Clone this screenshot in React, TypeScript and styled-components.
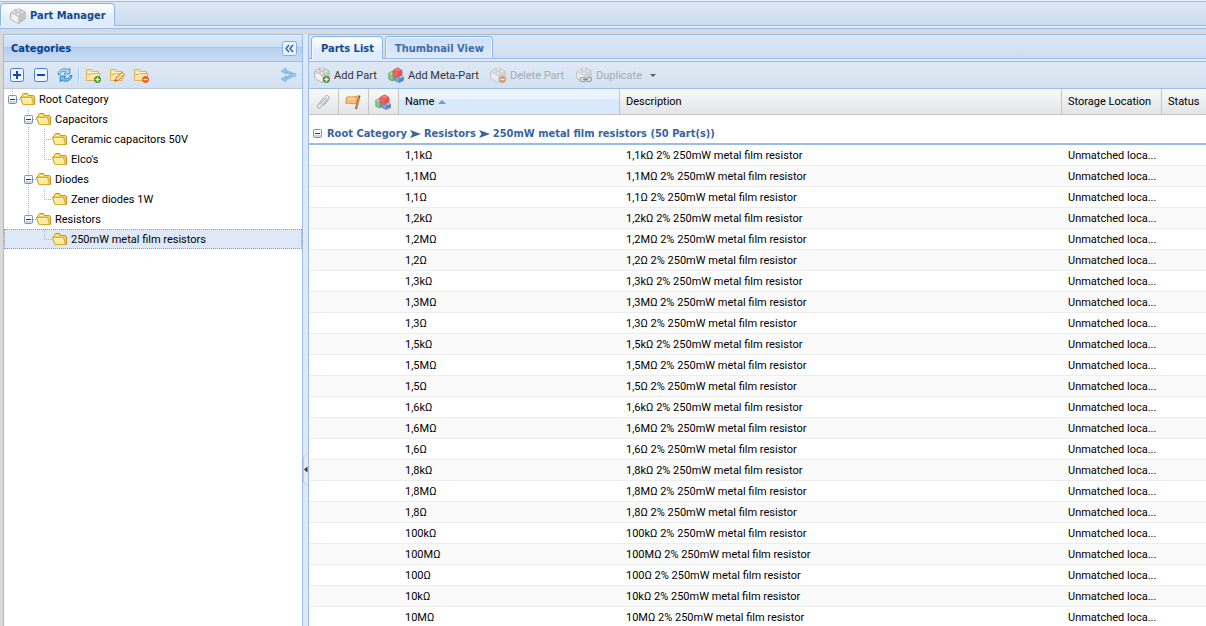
import React from 'react';
import styled, { createGlobalStyle, css } from 'styled-components';

const BOLD = '"DejaVu Sans Condensed", "Noto Sans", sans-serif';
const TEXT = 'Roboto, "Noto Sans", sans-serif';

const GlobalStyle = createGlobalStyle`
  * { box-sizing: border-box; }
  body {
    margin: 0;
    background: #d9d9d9;
    color: #000;
    font-family: ${TEXT};
    font-size: 11px;
    line-height: 14px;
  }
  button { font: inherit; color: inherit; margin: 0; border: 0; background: none; }
  svg { display: block; flex: none; }
`;

const Page = styled.div`
  display: flex;
  flex-direction: column;
  height: 100vh;
  overflow: hidden;
`;

const TabStrip = styled.div<{ $main?: boolean }>`
  display: flex;
  align-items: flex-end;
  gap: 2px;
  flex: none;
  height: 25px;
  padding: 0 ${p => (p.$main ? 0 : 2)}px;
  border-top: 1px solid #99bce8;
  border-bottom: 1px solid #99bce8;
  background: ${p => (p.$main ? 'linear-gradient(#dde8f5, #cbdbef)' : 'linear-gradient(#dbe7f5, #cddef1)')};
`;

const TopBar = styled.header`
  flex: none;
  padding-top: 1px;
  background: #eaf1fa;
`;

const TabLedge = styled.div`
  height: 3px;
  flex: none;
  background: #deecfd;
  border-bottom: 1px solid #99bce8;
`;

const Tab = styled.button<{ $active?: boolean }>`
  display: flex;
  align-items: center;
  justify-content: center;
  gap: 4px;
  height: 22px;
  padding: 2px 8px 0 9px;
  border: 1px solid #8db2e3;
  border-bottom-width: 0;
  border-radius: 4px 4px 0 0;
  box-shadow: inset 1px 1px 0 #f5f9fe, inset -1px 0 0 #f5f9fe;
  font-family: ${BOLD};
  font-weight: bold;
  white-space: nowrap;
  ${p => p.$active
    ? css`
        color: #15498b;
        background: linear-gradient(#fff, #deecfd 70%);
        height: 23px;
        margin-bottom: -1px;
      `
    : css`
        color: #416da3;
        background: linear-gradient(#cfe0f5, #dbe9fb);
      `}
`;

const Body = styled.main`
  display: flex;
  flex: 1;
  min-height: 0;
  margin: 5px 0 0 3px;
`;

const SidePanel = styled.aside`
  display: flex;
  flex-direction: column;
  width: 300px;
  flex: none;
  border: 1px solid #99bce8;
  border-bottom: 0;
  background: #fff;
`;

const PanelHeader = styled.div`
  display: flex;
  align-items: center;
  justify-content: space-between;
  height: 27px;
  flex: none;
  padding: 0 5px 0 7px;
  border-bottom: 1px solid #99bce8;
  background: linear-gradient(#dae7f6, #cddef3 45%, #abc7ec 46%, #abc7ec 50%, #b8cfee 51%, #cbddf3);
  box-shadow: inset 0 1px 0 #f0f5fb;
`;

const PanelTitle = styled.h2`
  margin: 0;
  padding-top: 2px;
  font-family: ${BOLD};
  font-size: 11px;
  font-weight: bold;
  color: #04408c;
`;

const ToolButton = styled.button`
  padding: 0;
  width: 15px;
  height: 15px;
`;

const Toolbar = styled.div<{ $edge?: string }>`
  display: flex;
  align-items: center;
  height: 27px;
  flex: none;
  padding: 0 1px;
  border-bottom: 1px solid ${p => p.$edge || '#99bce8'};
  background: linear-gradient(#dfe9f5, #d3e1f1);
`;

const IconButton = styled.button<{ $push?: boolean }>`
  display: flex;
  justify-content: center;
  align-items: center;
  width: 24px;
  height: 22px;
  padding: 0;
  ${p => p.$push && css`margin-left: auto; opacity: 0.7;`}
`;

const Separator = styled.span`
  width: 2px;
  height: 14px;
  margin: 0 1px;
  border-left: 1px solid #98c8ff;
  border-right: 1px solid #fff;
`;

const TextButton = styled.button<{ $width: number }>`
  display: flex;
  align-items: center;
  gap: 4px;
  height: 22px;
  min-width: ${p => p.$width}px;
  padding: 0 4px;
  color: #333;
  white-space: nowrap;
  &:disabled { color: #a5abb2; }
  &:disabled svg { opacity: 0.6; }
`;

const ButtonText = styled.span`
  padding-top: 2px;
`;

const MenuArrow = styled.svg`
  margin-left: 4px;
`;

const Splitter = styled.div`
  display: flex;
  flex-direction: column;
  justify-content: center;
  flex: none;
  width: 5px;
  padding-top: 278px;
  background: #dfe8f6;
`;

const Collapse = styled.button`
  padding: 0;
  width: 5px;
  height: 35px;
`;

const MainPanel = styled.section`
  display: flex;
  flex-direction: column;
  flex: 1;
  min-width: 0;
  border-left: 1px solid #99bce8;
  background: #fff;
`;

const Tree = styled.ul`
  list-style: none;
  margin: 0;
  padding: 0;
`;

const TreeRow = styled.li<{ $selected?: boolean }>`
  display: flex;
  align-items: center;
  height: 20px;
  white-space: nowrap;
  ${p => p.$selected && css`
    background: #dfe8f6;
    outline: 1px dotted #8a9bb5;
    outline-offset: -1px;
  `}
`;

const TreeLabel = styled.span`
  padding: 2px 0 0 3px;
`;

const GridPane = styled.div`
  flex: 1;
  min-height: 0;
  overflow: hidden;
`;

const PartsTable = styled.table`
  width: 100%;
  table-layout: fixed;
  border-collapse: separate;
  border-spacing: 0;
`;

const HeadCell = styled.th<{ $sorted?: boolean }>`
  height: 26px;
  padding: 0 6px;
  text-align: left;
  font-weight: normal;
  white-space: nowrap;
  border-right: 1px solid #c5c5c5;
  border-bottom: 1px solid #c5c5c5;
  background: ${p => (p.$sorted
    ? 'linear-gradient(#ebf3fd 40%, #d9e8fb 41%)'
    : 'linear-gradient(#f9f9f9, #e3e4e6)')};
  &:last-child { border-right: 0; }
`;

const SortButton = styled.button`
  display: flex;
  align-items: center;
  gap: 4px;
  padding: 0;
`;

const GroupCell = styled.td`
  height: 30px;
  padding: 9px 4px 0;
  border-bottom: 2px solid #99bbe8;
`;

const GroupTitle = styled.div`
  display: flex;
  align-items: center;
  gap: 5px;
  font-family: ${BOLD};
  font-weight: bold;
  color: #3764a0;
  white-space: nowrap;
`;

const Crumb = styled.span`
  display: flex;
  align-items: center;
  gap: 3px;
`;

const PartRow = styled.tr`
  background: #fff;
  &:nth-child(odd) { background: #fafafa; }
`;

const Cell = styled.td`
  height: 21px;
  padding: 1px 6px 0;
  border-bottom: 1px solid #ededed;
  white-space: nowrap;
  overflow: hidden;
`;

const Brick = () => (
  <g>
    <path d="M.5 5 5.5 1.500 8 2.500 10.500 1.500 15 4V11L8.500 15.500 1 11.500Z" fill="#d9d9d6" stroke="#a9a9a6" strokeWidth="1" />
    <path d="M1 5.500 8 8.500V15L1.500 11.500Z" fill="#f3f3f1" />
    <path d="M8 8.500 14.500 5V11L8.500 15Z" fill="#c4c4c1" />
    <path d="M1 5.500 8 8.500 14.500 5 9 2Z" fill="#e7e7e4" />
    <g fill="#fafaf9" stroke="#b2b2af" strokeWidth=".7">
      <path d="M2 4v1.500c1 1 3 1 4 0V4M6 6v1.500c1 1 3 1 4 0V6M6 2v1.500c1 1 3 1 4 0V2M10 4v1.500c1 1 3 1 4 0V4" />
      <ellipse cx="8" cy="2" rx="2" ry="1.200" /><ellipse cx="4" cy="4" rx="2" ry="1.200" />
      <ellipse cx="12" cy="4" rx="2" ry="1.200" /><ellipse cx="8" cy="6" rx="2" ry="1.200" />
    </g>
  </g>
);

const Badge = ({ minus }: { minus?: boolean }) => (
  <g>
    <circle cx="12.500" cy="12.500" r="3" fill={minus ? '#ee6a22' : '#69a84d'} stroke={minus ? '#d95a1a' : '#3f7d2a'} />
    <path d={minus ? 'M10.500 12.500h4' : 'M10.500 12.500h4M12.500 10.500v4'} stroke="#fff" strokeWidth="1.200" />
  </g>
);

const Icon = ({ children, size = 16 }: { children: React.ReactNode; size?: number }) => (
  <svg width={size} height={size} viewBox={`0 0 ${size} ${size}`} fill="none" aria-hidden="true">{children}</svg>
);

const BlocksIcon = () => (
  <Icon>
    <path d="M.8 6 4 4.500 8 6V12L4.500 14 .8 12Z" fill="#8cc48c" stroke="#5f9f66" strokeWidth=".8" />
    <path d="M4.500 8 7.500 7V12L4.500 13.500Z" fill="#67aa70" />
    <path d="M7 10 11 8 15.500 10V13.500L11 15.500 7 13.500Z" fill="#7ba6d6" stroke="#5580b8" strokeWidth=".8" />
    <path d="M11 11.500 15 10.500V13.500L11 15Z" fill="#5b88c0" />
    <path d="M5 3.500 9.500 1 14 3.500V8L9.500 10.500 5 8Z" fill="#f06464" stroke="#dc4a4c" strokeWidth=".8" />
    <path d="M9.500 6 13.500 4V8L9.500 10Z" fill="#df5255" />
    <ellipse cx="9.500" cy="2.800" rx="2.500" ry="1.500" fill="#ff8d86" stroke="#e05252" strokeWidth=".7" />
    <ellipse cx="3" cy="6.500" rx="1.500" ry="1" fill="#b9dfb6" />
    <ellipse cx="13" cy="10" rx="1.500" ry="1" fill="#aecbea" />
  </Icon>
);

const SmallFolder = () => (
  <g>
    <path d="M1.500 12.500V2.500H6.500L7.500 4.500H13.500V7" fill="#f8e0a0" stroke="#dfb45c" />
    <path d="M1.500 13.500V7.500H5.500L6.500 6.500H15L13.500 13.500Z" fill="#fbe6a8" stroke="#dfb45c" />
    <path d="M3 5.500H12" stroke="#fff6d8" />
  </g>
);

const FolderIcon = () => (
  <Icon>
    <path d="M2.500 12.500.5 6.500 2.500 4.500V3.500L3.500 2.500H7.500L8.500 4.500H13.500L14.500 5.500V13.500H3.500Z" fill="#f3cd52" stroke="#c4982c" />
    <path d="M.5 6.500H11.500L13.500 13.500H3Z" fill="#fdeb97" stroke="#d3a93a" />
    <path d="M2 7.500H11M3.500 4.500H7" stroke="#fffad2" />
  </Icon>
);

const ToggleBox = () => (
  <>
    <rect x=".5" y=".5" width="8" height="8" rx="1" fill="#f7f9fc" stroke="#7890b2" />
    <path d="M1 6h7v2H1Z" fill="#cdd7e5" />
    <path d="M2 4.500h5" stroke="#253a63" />
  </>
);

const Toggle = () => (
  <svg width="9" height="9" viewBox="0 0 9 9" aria-hidden="true"><ToggleBox /></svg>
);

const Arrowhead = () => (
  <svg width="11" height="8" viewBox="0 0 11 8" aria-hidden="true">
    <path d="M0 0 11 4 0 8 2.500 4Z" fill="#3764a0" />
  </svg>
);

type Guide = 'blank' | 'line' | 'elbow' | 'end' | 'toggle' | 'toggleEnd' | 'root';

const guideLines: Record<Guide, string> = {
  blank: '',
  line: 'M8.500 0V20',
  elbow: 'M8.500 0V20M8 10.500H16',
  end: 'M8.500 0V10M8 10.500H16',
  toggle: 'M8.500 0V20M13 10.500H16',
  toggleEnd: 'M8.500 0V8M13 10.500H16',
  root: 'M8.500 0V5M13 10.500H16',
};

const GuideCell = ({ kind }: { kind: Guide }) => {
  const box = kind === 'toggle' || kind === 'toggleEnd' || kind === 'root';
  return (
    <svg width="16" height="20" viewBox="0 0 16 20" aria-hidden="true">
      <path d={guideLines[kind]} stroke="#b5b5b5" strokeDasharray="1 1" fill="none" />
      {box && <g transform="translate(4 6)"><ToggleBox /></g>}
    </svg>
  );
};

const categories: { label: string; guides: Guide[]; selected?: boolean }[] = [
  { label: 'Root Category', guides: ['root'] },
  { label: 'Capacitors', guides: ['blank', 'toggle'] },
  { label: 'Ceramic capacitors 50V', guides: ['blank', 'line', 'elbow'] },
  { label: "Elco's", guides: ['blank', 'line', 'end'] },
  { label: 'Diodes', guides: ['blank', 'toggle'] },
  { label: 'Zener diodes 1W', guides: ['blank', 'line', 'end'] },
  { label: 'Resistors', guides: ['blank', 'toggleEnd'] },
  { label: '250mW metal film resistors', guides: ['blank', 'blank', 'end'], selected: true },
];

const parts = [
  '1,1kΩ', '1,1MΩ', '1,1Ω', '1,2kΩ', '1,2MΩ', '1,2Ω', '1,3kΩ', '1,3MΩ', '1,3Ω', '1,5kΩ', '1,5MΩ', '1,5Ω',
  '1,6kΩ', '1,6MΩ', '1,6Ω', '1,8kΩ', '1,8MΩ', '1,8Ω', '100kΩ', '100MΩ', '100Ω', '10kΩ', '10MΩ',
];

export default function App() {
  return (
    <>
      <GlobalStyle />
      <Page>
        <TopBar>
          <TabStrip $main>
            <Tab $active>
              <Icon><Brick /></Icon>
              Part Manager
            </Tab>
          </TabStrip>
          <TabLedge />
        </TopBar>
        <Body>
          <SidePanel>
            <PanelHeader>
              <PanelTitle>Categories</PanelTitle>
              <ToolButton aria-label="Collapse panel">
                <Icon size={15}>
                  <rect x=".5" y=".5" width="14" height="14" rx="2" fill="#e8f2fd" stroke="#84aee2" />
                  <path d="M7 4 4 7.500 7 11M11 4 8 7.500 11 11" stroke="#35639f" strokeWidth="1.500" />
                </Icon>
              </ToolButton>
            </PanelHeader>
            <Toolbar $edge="#c0cbd9">
              <IconButton aria-label="Expand all">
                <Icon>
                  <rect x="1.500" y="1.500" width="13" height="13" rx="2" fill="#edf4ff" stroke="#4a7be0" />
                  <path d="M4 8h8M8 4v8" stroke="#1b43b5" strokeWidth="2" />
                </Icon>
              </IconButton>
              <IconButton aria-label="Collapse all">
                <Icon>
                  <rect x="1.500" y="1.500" width="13" height="13" rx="2" fill="#edf4ff" stroke="#4a7be0" />
                  <path d="M4 8h8" stroke="#1b43b5" strokeWidth="2" />
                </Icon>
              </IconButton>
              <IconButton aria-label="Reload">
                <Icon>
                  <path d="M1 7.500C1.500 2.500 7 .2 11 2.800L12.800 1.200V7H7L9 5C7 3.600 3.500 4.500 3 7.500Z" fill="#a9dbf8" stroke="#3d8fd2" strokeWidth=".9" strokeLinejoin="round" />
                  <path d="M15 8.500C14.500 13.500 9 15.800 5 13.200L3.200 14.800V9H9L7 11C9 12.400 12.500 11.500 13 8.500Z" fill="#7cc0ee" stroke="#2b7ac4" strokeWidth=".9" strokeLinejoin="round" />
                </Icon>
              </IconButton>
              <Separator />
              <IconButton aria-label="Add category"><Icon><SmallFolder /><Badge /></Icon></IconButton>
              <IconButton aria-label="Edit category">
                <Icon>
                  <SmallFolder />
                  <path d="M6 14 7 11 13 5 15.500 7.500 9.500 13.500Z" fill="#f7c466" stroke="#c08436" strokeWidth=".9" />
                  <path d="M8.500 12 14 6.500" stroke="#fff0b2" />
                  <path d="M5.500 14.500 6.500 12.500 7.500 13.500Z" fill="#4b4135" />
                </Icon>
              </IconButton>
              <IconButton aria-label="Delete category"><Icon><SmallFolder /><Badge minus /></Icon></IconButton>
              <IconButton $push aria-label="Sync selection">
                <Icon>
                  <path d="M3 4C7 4 7 7 15 8C7 9 7 12 3 12" stroke="#529fd5" strokeWidth="3" />
                  <path d="M4 4C8 4 8 7 15 8C8 9 8 12 4 12" stroke="#8fd0f4" />
                  <path d="M0 4 5 .8V7ZM0 12 5 9V15Z" fill="#75bde8" stroke="#529fd5" strokeWidth=".7" />
                </Icon>
              </IconButton>
            </Toolbar>
            <Tree>
              {categories.map(c => (
                <TreeRow key={c.label} $selected={c.selected}>
                  {c.guides.map((g, i) => <GuideCell key={i} kind={g} />)}
                  <FolderIcon />
                  <TreeLabel>{c.label}</TreeLabel>
                </TreeRow>
              ))}
            </Tree>
          </SidePanel>
          <Splitter>
            <Collapse aria-label="Collapse sidebar">
              <svg width="5" height="35" viewBox="0 0 5 35" aria-hidden="true">
                <path d="M5 .5 .5 5V30L5 34.500" fill="#e9e9e9" stroke="#c6c9cd" />
                <path d="M4.500 14.500V20.500L1 17.500Z" fill="#333" />
              </svg>
            </Collapse>
          </Splitter>
          <MainPanel>
            <TabStrip>
              <Tab $active>Parts List</Tab>
              <Tab>Thumbnail View</Tab>
            </TabStrip>
            <TabLedge />
            <Toolbar>
              <TextButton $width={74}><Icon><Brick /><Badge /></Icon><ButtonText>Add Part</ButtonText></TextButton>
              <TextButton $width={102}><BlocksIcon /><ButtonText>Add Meta-Part</ButtonText></TextButton>
              <TextButton $width={86} disabled><Icon><Brick /><Badge minus /></Icon><ButtonText>Delete Part</ButtonText></TextButton>
              <TextButton $width={86} disabled>
                <Icon>
                  <Brick />
                  <rect x="4" y="10.500" width="5" height="4" rx="1.500" fill="#ddd" stroke="#666" />
                  <rect x="10.500" y="10.500" width="5" height="4" rx="1.500" fill="#ddd" stroke="#666" />
                  <path d="M7 12.500h5" stroke="#555" />
                </Icon>
                <ButtonText>Duplicate</ButtonText>
                <MenuArrow width="6" height="3" viewBox="0 0 6 3" aria-hidden="true"><path d="M0 0H6L3 3Z" fill="#000" /></MenuArrow>
              </TextButton>
            </Toolbar>
            <GridPane>
              <PartsTable>
                <colgroup>
                  <col width="30" /><col width="30" /><col width="30" /><col width="221" /><col /><col width="100" /><col width="44" />
                </colgroup>
                <thead>
                  <tr>
                    <HeadCell aria-label="Attachments">
                      <Icon>
                        <path d="M5 10.500 10 5C11.500 3.500 13 5 11.500 6.500L6 13C4 15.500 1 13.500 3 10.500L9.500 3C12 0 15.500 2.500 13.500 5.500L8.500 11.500" stroke="#a2a2a2" />
                      </Icon>
                    </HeadCell>
                    <HeadCell aria-label="Flags">
                      <Icon>
                        <path d="M1.500 3.500C4 1.500 6 4.500 12 2V9C7 11 5 8 1 9.500Z" fill="#f9c078" stroke="#e0913c" />
                        <path d="M3 5C5 4 7 6 10.500 4.500" stroke="#ffe6bd" />
                        <path d="M14.500 1.500 11 15" stroke="#8f6234" strokeWidth="2.200" />
                        <path d="M14 3 11.500 14" stroke="#d8a566" />
                      </Icon>
                    </HeadCell>
                    <HeadCell aria-label="Meta-part"><BlocksIcon /></HeadCell>
                    <HeadCell $sorted aria-sort="ascending">
                      <SortButton>
                        Name
                        <svg width="8" height="4" viewBox="0 0 8 4" aria-hidden="true"><path d="M0 4H8L4 0Z" fill="#6a9ccc" /></svg>
                      </SortButton>
                    </HeadCell>
                    <HeadCell>Description</HeadCell>
                    <HeadCell>Storage Location</HeadCell>
                    <HeadCell>Status</HeadCell>
                  </tr>
                </thead>
                <tbody>
                  <tr>
                    <GroupCell colSpan={7}>
                      <GroupTitle>
                        <Toggle />
                        <Crumb>
                          Root Category <Arrowhead /> Resistors <Arrowhead /> 250mW metal film resistors (50 Part(s))
                        </Crumb>
                      </GroupTitle>
                    </GroupCell>
                  </tr>
                  {parts.map(p => (
                    <PartRow key={p}>
                      <Cell /><Cell /><Cell />
                      <Cell>{p}</Cell>
                      <Cell>{p} 2% 250mW metal film resistor</Cell>
                      <Cell>Unmatched loca...</Cell>
                      <Cell />
                    </PartRow>
                  ))}
                </tbody>
              </PartsTable>
            </GridPane>
          </MainPanel>
        </Body>
      </Page>
    </>
  );
}
